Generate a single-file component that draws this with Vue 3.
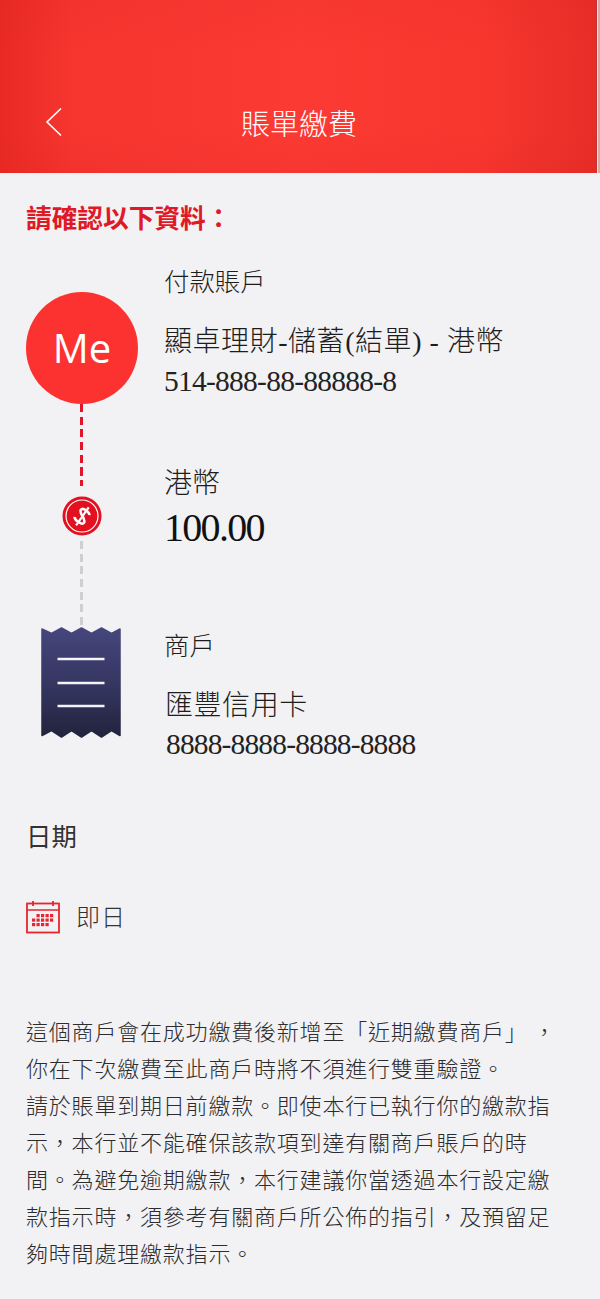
<script setup>
const dots = [
  [1, 0], [2, 0], [3, 0], [4, 0],
  [0, 1], [1, 1], [2, 1], [3, 1], [4, 1],
  [0, 2], [1, 2], [2, 2], [3, 2],
];
</script>

<template>
  <div class="page" lang="zh-Hant">
    <header class="top-bar">
      <div class="nav">
        <svg class="back" viewBox="0 0 18 30" width="18" height="30">
          <path d="M16 1.5 L2 15 L16 28.5" fill="none" stroke="#fff" stroke-width="1.6" />
        </svg>
        <h1 class="title">賬單繳費</h1>
      </div>
    </header>

    <main class="content">
      <h2 class="confirm">請確認以下資料：</h2>

      <section class="flow">
        <div class="rail">
          <div class="me">Me</div>
          <div class="dash dash-red"></div>
          <svg class="coin" viewBox="0 0 40 40" width="40" height="40">
            <circle cx="20" cy="20" r="19.5" fill="#e3101f" />
            <circle cx="20" cy="20" r="16" fill="none" stroke="#fff" stroke-width="1.2" />
            <g transform="rotate(35 20 20)" fill="none" stroke="#fff" stroke-width="2.6">
              <path d="M25.5 15 C24 12.5 15.5 12 15.5 15.5 C15.5 20 25.5 19.5 25.5 24.5 C25.5 28 16 27.5 14.5 25" />
              <path d="M20.5 9 V31" stroke-width="2.2" />
            </g>
          </svg>
          <div class="dash dash-grey"></div>
          <svg class="bill" viewBox="0 0 80 111" width="80" height="111">
            <defs>
              <linearGradient id="billFill" x1="0" y1="0" x2="0" y2="1">
                <stop offset="0" stop-color="#45467c" />
                <stop offset="0.6" stop-color="#32335c" />
                <stop offset="1" stop-color="#22233c" />
              </linearGradient>
            </defs>
            <path
              d="M1 2 L10.5 6.5 L20.5 1 L30.5 6.5 L40.5 1 L50.5 6.5 L60.5 1 L70.5 6.5 L79 2 V108.5 L70.5 103.5 L60.5 110 L50.5 103.5 L40.5 110 L30.5 103.5 L20.5 110 L10.5 103.5 L1 108.5 Z"
              fill="url(#billFill)"
              stroke="url(#billFill)"
              stroke-width="1.5"
              stroke-linejoin="round"
            />
            <path d="M16.5 30 H63.5 M16.5 54 H63.5 M16.5 77 H63.5" transform="translate(0 2)" stroke="#f4f3f6" stroke-width="2.6" />
          </svg>
        </div>

        <div class="details">
          <div class="label">付款賬戶</div>
          <div class="name account-name">顯卓理財-儲蓄(結單) - 港幣</div>
          <div class="number">514-888-88-88888-8</div>

          <div class="name currency">港幣</div>
          <div class="amount">100.00</div>

          <div class="label merchant">商戶</div>
          <div class="name account-name merchant-name">匯豐信用卡</div>
          <div class="number merchant-no">8888-8888-8888-8888</div>
        </div>
      </section>

      <div class="label date-label">日期</div>
      <div class="date-row">
        <svg viewBox="0 0 34 34" width="34" height="34">
          <rect x="1" y="3.5" width="32" height="29" fill="none" stroke="#e5252f" stroke-width="1.8" />
          <path d="M1 10 H33" stroke="#e5252f" stroke-width="1.5" />
          <path d="M7 1 V6 M27 1 V6" stroke="#e5252f" stroke-width="1.8" />
          <rect
            v-for="(d, i) in dots"
            :key="i"
            :x="6 + d[0] * 4.5"
            :y="14 + d[1] * 4.5"
            width="3.2"
            height="3.2"
            fill="#e5252f"
          />
        </svg>
        <span class="date-text">即日</span>
      </div>

      <p class="notes">
        這個商戶會在成功繳費後新增至「近期繳費商戶」 ，<br />
        你在下次繳費至此商戶時將不須進行雙重驗證。<br />
        請於賬單到期日前繳款。即使本行已執行你的繳款指<br />
        示，本行並不能確保該款項到達有關商戶賬戶的時<br />
        間。為避免逾期繳款，本行建議你當透過本行設定繳<br />
        款指示時，須參考有關商戶所公佈的指引，及預留足<br />
        夠時間處理繳款指示。
      </p>
    </main>
  </div>
</template>

<style>
html,
body {
  margin: 0;
  background: #f2f1f4;
}
</style>

<style scoped>
.page {
  width: 600px;
  min-height: 1299px;
  background: #f2f1f4;
  color: #333;
  font-family: "Noto Sans CJK TC", "Noto Sans", sans-serif;
  overflow: hidden;
}

.top-bar {
  height: 173px;
  box-sizing: border-box;
  padding: 93px 0 22px;
  background:
    linear-gradient(90deg, transparent 596px, #c4302c 596px 597px, #f3e3e3 597px 598px, #d9a9a9 598px),
    linear-gradient(180deg, rgba(214, 30, 30, 0.1), rgba(214, 30, 30, 0) 30%, rgba(214, 30, 30, 0) 75%, rgba(214, 30, 30, 0.12)),
    linear-gradient(90deg, #e92a24, #f6352f 12%, #fb3a33 50%, #f8372f 80%, #e72d28);
}

.nav {
  position: relative;
  height: 58px;
  display: flex;
  align-items: center;
  justify-content: center;
}

.back {
  position: absolute;
  left: 45px;
  top: 14px;
}

.title {
  margin: 0 2px 0 0;
  font-size: 29px;
  font-weight: 300;
  line-height: 58px;
  color: #fff;
}

.content {
  padding: 0 26px;
}

.confirm {
  margin: 0;
  padding-top: 25px;
  font-size: 25.7px;
  line-height: 38px;
  font-weight: 700;
  color: #df1a26;
}

.flow {
  display: flex;
  gap: 26px;
  margin-top: 29px;
}

.rail {
  width: 112px;
  padding-top: 27px;
  display: flex;
  flex-direction: column;
  align-items: center;
  flex-shrink: 0;
}

.me {
  width: 112px;
  height: 112px;
  border-radius: 50%;
  background: #fb3230;
  color: #fff;
  font-family: "Open Sans", sans-serif;
  font-size: 40px;
  line-height: 112px;
  text-align: center;
}

.dash {
  width: 3px;
  margin-right: 1px;
}

.dash-red {
  height: 82px;
  margin-bottom: 10px;
  background: repeating-linear-gradient(180deg, #e0162a 0 8px, transparent 8px 12.7px);
}

.dash-grey {
  height: 84px;
  margin-top: 5px;
  background: repeating-linear-gradient(180deg, #cfcfd1 0 8px, transparent 8px 12.7px);
}

.coin {
  flex-shrink: 0;
  margin-right: 1px;
}

.bill {
  margin: 2px 2px 0 0;
  flex-shrink: 0;
}

.details {
  flex: 1;
  margin-top: -2px;
}

.label {
  font-size: 25.4px;
  font-weight: 300;
  line-height: 34px;
  color: #1d1d1d;
}

.name {
  font-size: 28px;
  font-weight: 300;
  line-height: 39px;
  color: #1d1d1d;
}

.account-name {
  margin-top: 25px;
  font-family: "Liberation Serif", "Noto Sans CJK TC", serif;
  letter-spacing: 0.55px;
}

.number {
  font-family: "Liberation Serif", serif;
  font-size: 29.5px;
  letter-spacing: -0.75px;
  line-height: 40px;
  color: #222;
}

.currency {
  margin-top: 61px;
}

.amount {
  margin-top: 2px;
  font-family: "Liberation Serif", serif;
  font-size: 40px;
  letter-spacing: -1.7px;
  line-height: 50px;
  color: #111;
}

.merchant {
  margin-top: 74px;
}

.merchant-name {
  padding-left: 1px;
}

.merchant-no {
  padding-left: 2px;
  line-height: 38px;
  letter-spacing: -0.85px;
}

.date-label {
  margin-top: 55px;
  font-weight: 400;
  color: #333;
}

.date-row {
  display: flex;
  align-items: center;
  gap: 16px;
  height: 34px;
  margin-top: 48px;
  color: #333;
}

.date-text {
  margin-top: -3px;
  font-size: 24px;
  font-weight: 300;
  letter-spacing: 1px;
}

.notes {
  margin: 78px 0 0;
  font-size: 22px;
  font-weight: 300;
  line-height: 37px;
  letter-spacing: 0.8px;
  color: #2c2c2c;
  white-space: nowrap;
}
</style>
